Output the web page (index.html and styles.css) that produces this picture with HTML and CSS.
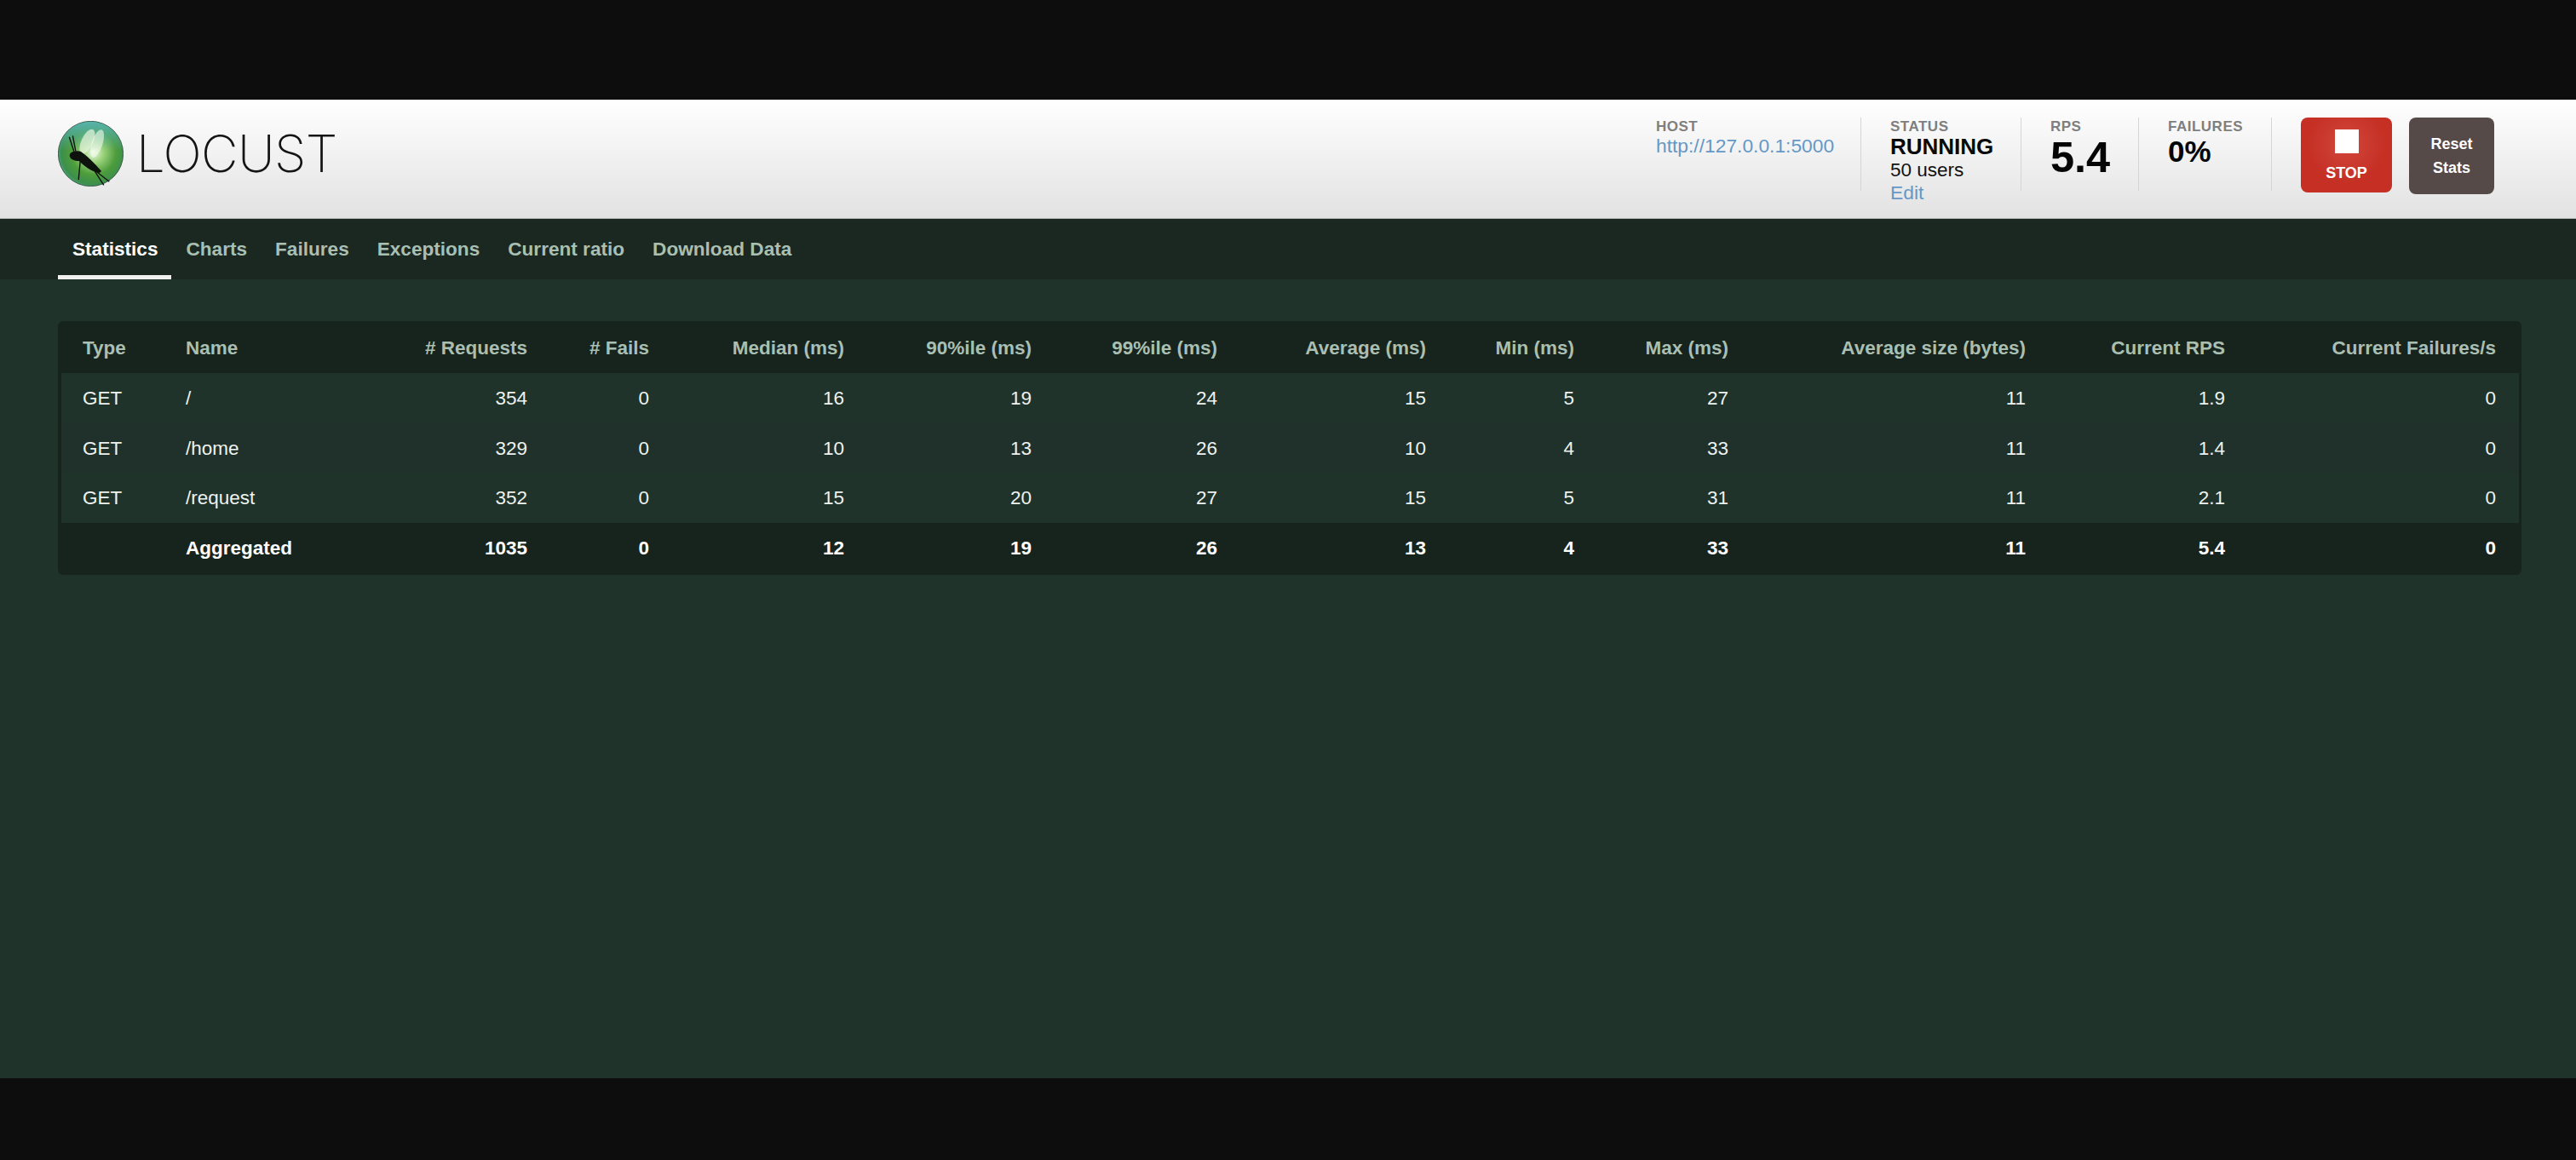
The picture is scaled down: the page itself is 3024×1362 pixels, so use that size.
FILE: index.html
```html
<!DOCTYPE html>
<html lang="en">
<head>
<meta charset="utf-8">
<title>Locust</title>
<link rel="stylesheet" href="styles.css">
</head>
<body>
<div class="app">
  <header class="topbar">
    <div class="logo">
      <svg class="logo-mark" viewBox="57 67 226 226" aria-hidden="true">
        <defs>
          <radialGradient id="orb" cx="54%" cy="48%" r="60%">
            <stop offset="0" stop-color="#eef9e6"/>
            <stop offset="0.25" stop-color="#9ed47e"/>
            <stop offset="0.58" stop-color="#4d9c3c"/>
            <stop offset="0.82" stop-color="#3c8f4c"/>
            <stop offset="1" stop-color="#58b596"/>
          </radialGradient>
          <linearGradient id="sheen" x1="0" y1="0" x2="0" y2="1">
            <stop offset="0" stop-color="#58b3ad" stop-opacity="1"/>
            <stop offset="0.45" stop-color="#58b3ad" stop-opacity="0"/>
          </linearGradient>
        </defs>
        <circle cx="170" cy="180" r="112" fill="url(#orb)" stroke="#2f4a42" stroke-width="2.5"/>
        <circle cx="170" cy="180" r="111" fill="url(#sheen)"/>
        <ellipse cx="158" cy="138" rx="20" ry="46" transform="rotate(25 158 138)" fill="#e8f5e0" opacity="0.7"/>
        <ellipse cx="192" cy="145" rx="19" ry="50" transform="rotate(18 192 145)" fill="#f4fbf0" opacity="0.6"/>
        <path d="M97 185 C100 172 118 168 135 172 C155 185 185 215 207 240 L200 246 C170 240 150 225 130 205 C115 205 98 200 97 185Z" fill="#0d120d"/>
        <path d="M112 172 L96 122 M118 170 L108 118 M134 204 L128 270 M170 226 L234 276 M180 234 L215 288" fill="none" stroke="#0d120d" stroke-width="4"/>
      </svg>
      <span class="logo-word">LOCUST</span>
    </div>
    <div class="stats">
      <div class="stat stat-host">
        <div class="stat-label">HOST</div>
        <a class="stat-link">http://127.0.0.1:5000</a>
      </div>
      <div class="stat stat-status">
        <div class="stat-label">STATUS</div>
        <div class="status-value">RUNNING</div>
        <div class="status-users">50 users</div>
        <a class="stat-link">Edit</a>
      </div>
      <div class="stat stat-rps">
        <div class="stat-label">RPS</div>
        <div class="rps-value">5.4</div>
      </div>
      <div class="stat stat-fail">
        <div class="stat-label">FAILURES</div>
        <div class="fail-value">0%</div>
      </div>
      <div class="actions">
        <button class="btn btn-stop" type="button"><span class="stop-square"></span><span>STOP</span></button>
        <button class="btn btn-reset" type="button">Reset<br>Stats</button>
      </div>
    </div>
  </header>
  <nav class="tabs">
    <a class="tab tab-active">Statistics</a>
    <a class="tab">Charts</a>
    <a class="tab">Failures</a>
    <a class="tab">Exceptions</a>
    <a class="tab">Current ratio</a>
    <a class="tab">Download Data</a>
  </nav>
  <main class="content">
    <div class="table-box">
      <table class="stats-table">
        <colgroup>
          <col class="c1"><col class="c2"><col class="c3"><col class="c4"><col class="c5"><col class="c6">
          <col class="c7"><col class="c8"><col class="c9"><col class="c10"><col class="c11"><col class="c12"><col class="c13">
        </colgroup>
        <thead>
          <tr><th class="left">Type</th><th class="left">Name</th><th># Requests</th><th># Fails</th><th>Median (ms)</th><th>90%ile (ms)</th><th>99%ile (ms)</th><th>Average (ms)</th><th>Min (ms)</th><th>Max (ms)</th><th>Average size (bytes)</th><th>Current RPS</th><th>Current Failures/s</th></tr>
        </thead>
        <tbody>
          <tr><td class="left">GET</td><td class="left">/</td><td>354</td><td>0</td><td>16</td><td>19</td><td>24</td><td>15</td><td>5</td><td>27</td><td>11</td><td>1.9</td><td>0</td></tr>
          <tr><td class="left">GET</td><td class="left">/home</td><td>329</td><td>0</td><td>10</td><td>13</td><td>26</td><td>10</td><td>4</td><td>33</td><td>11</td><td>1.4</td><td>0</td></tr>
          <tr><td class="left">GET</td><td class="left">/request</td><td>352</td><td>0</td><td>15</td><td>20</td><td>27</td><td>15</td><td>5</td><td>31</td><td>11</td><td>2.1</td><td>0</td></tr>
        </tbody>
        <tfoot>
          <tr><td class="left"></td><td class="left">Aggregated</td><td>1035</td><td>0</td><td>12</td><td>19</td><td>26</td><td>13</td><td>4</td><td>33</td><td>11</td><td>5.4</td><td>0</td></tr>
        </tfoot>
      </table>
    </div>
  </main>
</div>
</body>
</html>
```
FILE: styles.css
```css
* { box-sizing: border-box; }
html, body { margin: 0; height: 100%; }
body {
  background: #0d0d0d;
  padding: 117px 0 96px;
  font-family: "Liberation Sans", Arial, sans-serif;
  overflow: hidden;
}
.app { height: 1149px; display: flex; flex-direction: column; background: #20332b; }

.topbar {
  height: 140px;
  flex: none;
  display: flex;
  justify-content: space-between;
  padding: 21px 96px 0 68px;
  background: linear-gradient(#ffffff, #e2e2e2);
  border-bottom: 1px solid #b4b8b4;
}
.logo { display: flex; align-items: center; height: 84px; gap: 15px; }
.logo-mark { width: 77px; height: 77px; }
.logo-word {
  font-family: Inter, "Liberation Sans", sans-serif;
  font-weight: 200;
  font-size: 60px;
  line-height: 1;
  color: #141414;
  letter-spacing: -0.6px;
}

.stats { display: flex; align-items: flex-start; }
.stat {
  height: 86px;
  padding-left: 34px;
  border-right: 1px solid #d5d5d5;
  white-space: nowrap;
}
.stat-host { width: 243px; padding-left: 2px; }
.stat-status { width: 188px; }
.stat-rps { width: 138px; }
.stat-fail { width: 156px; }
.stat-label {
  font-size: 17px;
  line-height: 17px;
  margin-top: 2px;
  color: #7f7f7f;
  font-weight: bold;
  letter-spacing: 0.5px;
}
.stat-link { display: block; font-size: 22.8px; line-height: 26px; margin-top: 1px; color: #6598c6; }
.status-value { font-size: 26px; line-height: 28px; margin-top: 1px; font-weight: bold; color: #0a0a0a; }
.status-users { font-size: 22.5px; line-height: 28px; color: #111; }
.stat-status .stat-link { line-height: 24px; margin-top: 0; }
.rps-value { font-size: 50.5px; line-height: 52px; font-weight: bold; color: #050505; margin-top: 2px; }
.fail-value { font-size: 35px; line-height: 40px; font-weight: bold; color: #050505; margin-top: 1px; }

.actions { display: flex; align-items: flex-start; gap: 20px; margin-left: 34px; }
.btn {
  border: 0;
  border-radius: 8px;
  color: #fff;
  font-family: inherit;
  font-weight: bold;
  padding: 0;
}
.btn-stop {
  width: 107px;
  height: 88px;
  background: radial-gradient(circle at 50% 35%, #d2473c, #c52f24 60%);
  font-size: 18px;
  display: flex;
  flex-direction: column;
  align-items: center;
  padding-top: 14px;
  gap: 13px;
}
.stop-square { width: 28px; height: 28px; background: #fff; display: block; }
.btn-reset {
  width: 100px;
  height: 90px;
  background: #564a48;
  font-size: 18px;
  line-height: 28px;
}

.tabs {
  height: 71px;
  flex: none;
  display: flex;
  padding-left: 68px;
  background: #1a2821;
}
.tab {
  height: 71px;
  padding: 23px 16px 0 17px;
  font-size: 22.6px;
  line-height: 26px;
  font-weight: bold;
  color: #a9bfb2;
  white-space: nowrap;
}
.tab-active { color: #fff; border-bottom: 5px solid #f0f0f0; }

.content { padding: 49px 64px 0 68px; }
.table-box {
  width: 2892px;
  padding: 0 3px 0 4px;
  background: #17231d;
  border-radius: 6px;
}
.stats-table {
  width: 2885px;
  table-layout: fixed;
  border-collapse: collapse;
  font-size: 22.5px;
  line-height: 26px;
  color: #eef2ef;
}
.stats-table th, .stats-table td { padding: 0 27px 0 25px; text-align: right; white-space: nowrap; }
.stats-table th.left, .stats-table td.left { text-align: left; }
.stats-table th { height: 61px; padding-top: 2px; color: #a9bfb2; font-weight: bold; }
.stats-table tbody td { height: 58.6px; padding-top: 2px; background: #20332b; }
.stats-table tbody tr:nth-child(even) td { background: #1f312a; }
.stats-table tfoot td { height: 61px; color: #fff; font-weight: bold; }
.c1 { width: 121px; } .c2 { width: 207px; } .c3 { width: 246px; } .c4 { width: 143px; }
.c5 { width: 229px; } .c6 { width: 220px; } .c7 { width: 218px; } .c8 { width: 245px; }
.c9 { width: 174px; } .c10 { width: 181px; } .c11 { width: 349px; } .c12 { width: 234px; } .c13 { width: 318px; }
```
